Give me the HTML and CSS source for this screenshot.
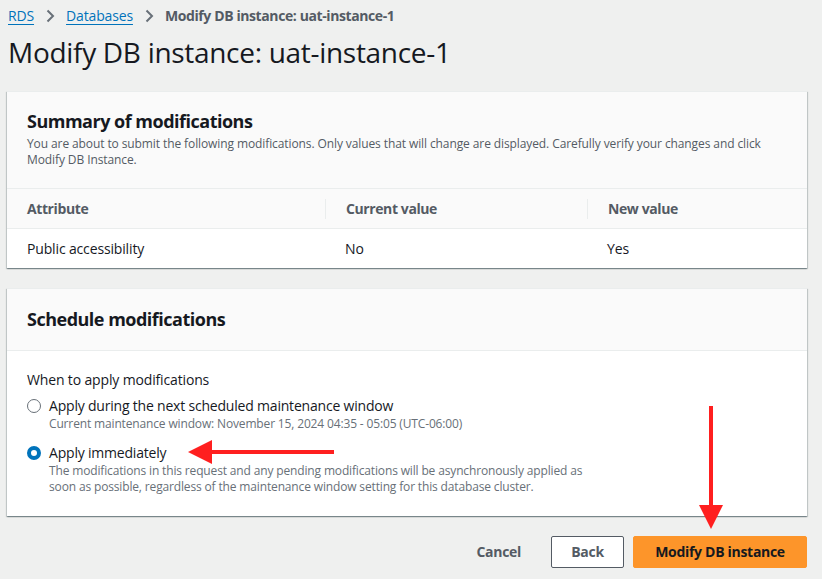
FILE: index.html
```html
<!DOCTYPE html>
<html lang="en">
<head>
<meta charset="utf-8">
<title>Modify DB instance: uat-instance-1</title>
<link rel="stylesheet" href="styles.css">
</head>
<body>
<div class="page">
  <nav class="crumbs">
    <a class="crumb-link" href="#">RDS</a>
    <svg class="chev" width="16" height="16" viewBox="0 0 16 16"><path d="M5.5 2.5 11 8l-5.5 5.5" fill="none" stroke="#687078" stroke-width="2"/></svg>
    <a class="crumb-link" href="#">Databases</a>
    <svg class="chev" width="16" height="16" viewBox="0 0 16 16"><path d="M5.5 2.5 11 8l-5.5 5.5" fill="none" stroke="#687078" stroke-width="2"/></svg>
    <span class="crumb-current">Modify DB instance: uat-instance-1</span>
  </nav>
  <h1 class="page-title">Modify DB instance: uat-instance-1</h1>

  <section class="card">
    <div class="card-head">
      <h2 class="card-title">Summary of modifications</h2>
      <p class="card-desc">You are about to submit the following modifications. Only values that will change are displayed. Carefully verify your changes and click Modify DB Instance.</p>
    </div>
    <div class="tbl">
      <div class="tbl-row tbl-headrow">
        <div class="cell c1">Attribute</div>
        <div class="cell c2 sep">Current value</div>
        <div class="cell c3 sep">New value</div>
      </div>
      <div class="tbl-row tbl-datarow">
        <div class="cell c1">Public accessibility</div>
        <div class="cell c2">No</div>
        <div class="cell c3">Yes</div>
      </div>
    </div>
  </section>

  <section class="card card-schedule">
    <div class="card-head head-simple">
      <h2 class="card-title">Schedule modifications</h2>
    </div>
    <div class="card-body">
      <div class="field-label">When to apply modifications</div>
      <div class="radio-opt">
        <span class="radio"></span>
        <div class="radio-text">
          <div class="radio-label">Apply during the next scheduled maintenance window</div>
          <div class="radio-desc">Current maintenance window: November 15, 2024 04:35 - 05:05 (UTC-06:00)</div>
        </div>
      </div>
      <div class="radio-opt opt-second">
        <span class="radio checked"></span>
        <div class="radio-text">
          <div class="radio-label">Apply immediately</div>
          <div class="radio-desc">The modifications in this request and any pending modifications will be asynchronously applied as<br>soon as possible, regardless of the maintenance window setting for this database cluster.</div>
        </div>
      </div>
    </div>
  </section>

  <div class="actions">
    <button class="btn btn-link">Cancel</button>
    <button class="btn btn-normal">Back</button>
    <button class="btn btn-primary">Modify DB instance</button>
  </div>

  <svg class="arrow arrow-h" width="150" height="26" viewBox="0 0 150 26">
    <rect x="22" y="11" width="124" height="4" fill="#ff1f1f"/>
    <path d="M0 13 24 1v24z" fill="#ff1f1f"/>
  </svg>
  <svg class="arrow arrow-v" width="26" height="124" viewBox="0 0 26 124">
    <rect x="11" y="0" width="4" height="102" fill="#ff1f1f"/>
    <path d="M13 123 1 99h24z" fill="#ff1f1f"/>
  </svg>
</div>
</body>
</html>
```

FILE: styles.css
```css
* { box-sizing: border-box; }
html, body {
  margin: 0;
  padding: 0;
  background: #eff0ef;
}
body {
  font-family: "Open Sans", "Noto Sans", sans-serif;
  color: #16191f;
  width: 822px;
  height: 579px;
  overflow: hidden;
  letter-spacing: -0.15px;
}
.page {
  position: relative;
  padding: 6px 15px 0 7px;
}
.crumbs {
  display: flex;
  align-items: center;
  height: 20px;
  padding-left: 1px;
  font-size: 14px;
  line-height: 20px;
}
.crumb-link {
  color: #0073bb;
  text-decoration: underline;
  text-underline-offset: 3px;
}
.chev {
  margin: 0 8px;
}
.crumb-current {
  color: #545b64;
  font-weight: 700;
  letter-spacing: -0.4px;
}
.page-title {
  margin: 8px 0 0 1px;
  font-size: 28px;
  line-height: 36px;
  font-weight: 400;
  color: #16191f;
  letter-spacing: -0.3px;
}
.card {
  margin-top: 21px;
  background: #fff;
  border-top: 1px solid #eaeded;
  box-shadow: 0 1px 1px 0 rgba(0, 28, 36, 0.3), 1px 1px 1px 0 rgba(0, 28, 36, 0.15), -1px 1px 1px 0 rgba(0, 28, 36, 0.15);
}
.card-head {
  background: #fafafa;
  padding: 18px 20px 0 20px;
  height: 96px;
}
.card-title {
  margin: 0;
  font-size: 18px;
  line-height: 22px;
  font-weight: 700;
  color: #16191f;
  letter-spacing: -0.5px;
}
.card-desc {
  margin: 4px 0 0 0;
  font-size: 12px;
  line-height: 16px;
  color: #545b64;
  letter-spacing: -0.1px;
}
.tbl-row {
  display: grid;
  grid-template-columns: 318px 262px 1fr;
  height: 40px;
  align-items: center;
  border-top: 1px solid #eaeded;
}
.tbl-headrow {
  background: #fafafa;
  font-weight: 700;
  color: #545b64;
  font-size: 14px;
  letter-spacing: -0.4px;
}
.tbl-datarow {
  background: #fff;
  font-size: 14px;
  color: #16191f;
}
.cell {
  padding-left: 20px;
  line-height: 20px;
}
.sep {
  border-left: 1px solid #eaeded;
}
.card-schedule {
  margin-top: 20px;
}
.head-simple {
  height: 62px;
  padding-top: 19px;
  border-bottom: 1px solid #eaeded;
}
.card-body {
  padding: 19px 20px 20px 20px;
}
.field-label {
  font-size: 14px;
  line-height: 20px;
  color: #16191f;
}
.radio-opt {
  display: flex;
  align-items: flex-start;
  margin-top: 6px;
}
.opt-second {
  margin-top: 10px;
}
.radio {
  flex: none;
  width: 14px;
  height: 14px;
  margin: 3px 8px 0 0;
  border: 1.5px solid #687078;
  border-radius: 50%;
  background: #fff;
}
.radio.checked {
  border: 4.5px solid #0073bb;
}
.radio-label {
  font-size: 14px;
  line-height: 20px;
  color: #16191f;
  letter-spacing: -0.2px;
}
.radio-desc {
  font-size: 12px;
  line-height: 16.5px;
  color: #687078;
  letter-spacing: -0.15px;
}
.actions {
  display: flex;
  justify-content: flex-end;
  align-items: center;
  margin-top: 20px;
  gap: 9px;
}
.btn {
  font-family: "Open Sans", "Noto Sans", sans-serif;
  font-size: 14px;
  font-weight: 700;
  height: 32px;
  border-radius: 2px;
  cursor: pointer;
  letter-spacing: -0.3px;
}
.btn-link {
  background: none;
  border: none;
  color: #545b64;
  padding: 0 20px;
  margin-right: 1px;
}
.btn-normal {
  background: #fff;
  border: 1px solid #545b64;
  color: #545b64;
  width: 73px;
}
.btn-primary {
  background: #fd952a;
  border: 1px solid #fd952a;
  color: #16191f;
  width: 174px;
}
.arrow {
  position: absolute;
}
.arrow-h {
  left: 188px;
  top: 439px;
}
.arrow-v {
  left: 698px;
  top: 406px;
}
```
